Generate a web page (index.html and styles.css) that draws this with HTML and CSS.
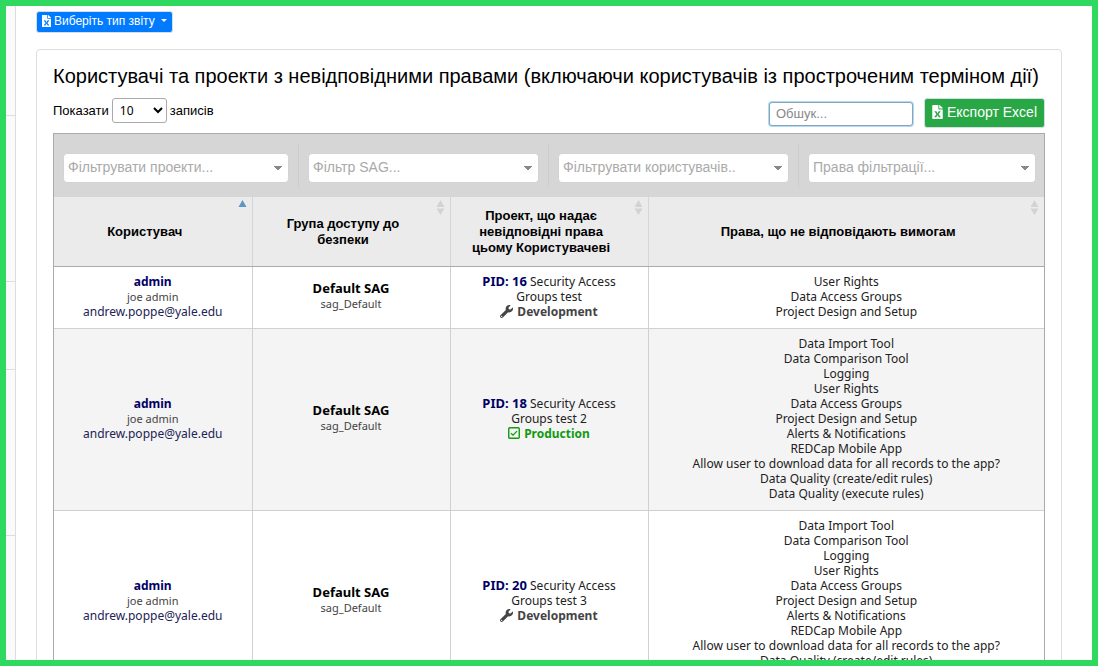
FILE: index.html
```html
<!DOCTYPE html>
<html lang="uk">
<head>
<meta charset="utf-8">
<title>Користувачі та проекти з невідповідними правами</title>
<link rel="stylesheet" href="styles.css">
</head>
<body>
<svg width="0" height="0" class="sprite" aria-hidden="true">
  <symbol id="file" viewBox="0 0 384 512"><path fill="currentColor" fill-rule="evenodd" d="M224 136V0H24C11 0 0 11 0 24v464c0 13 11 24 24 24h336c13 0 24-11 24-24V160H248c-13 0-24-11-24-24zM90 224h49c5 0 9 2 11 6 37 68 36 65 42 80 12-24 5-14 42-80 2-4 6-6 11-6h49c9 0 15 10 10 18L230 336l74 94c5 8-1 18-10 18h-49c-4 0-8-2-10-6-35-65-36-66-43-80-9 22-3 11-43 80-2 4-6 6-11 6H90c-9 0-15-10-10-18l76-94-76-94c-5-8 1-18 10-18zM384 122v6H256V0h6c7 0 13 3 17 7l98 98c4 4 7 11 7 17z"/></symbol>
  <symbol id="wrench" viewBox="0 0 512 512"><path fill="currentColor" fill-rule="evenodd" d="M508 109c-2-9-13-12-20-5l-74 74-68-11-11-68 74-74c7-7 4-18-6-20-48-12-101 1-139 39-40 40-52 98-35 149L19 403c-25 25-25 66 0 90s66 25 91 0l209-210c51 17 109 6 150-35 38-38 51-91 39-139zM64 472a24 24 0 1 1 0-48 24 24 0 0 1 0 48z"/></symbol>
  <symbol id="check" viewBox="0 0 12 12"><rect x="0.75" y="0.75" width="10.5" height="10.5" rx="1" fill="none" stroke="currentColor" stroke-width="1.4"/><path d="M3 6.2 5 8.1 9 4.1" fill="none" stroke="currentColor" stroke-width="1.3"/></symbol>
  <symbol id="both" viewBox="0 0 9 15"><path fill="currentColor" d="M4.500 0 8.500 7H.5zM.5 8.500h8L4.500 15z"/></symbol>
  <symbol id="asc" viewBox="0 0 9 15"><path fill="currentColor" d="M4.500 0 8.500 7H.5z"/></symbol>
</svg>
<div class="frame">
  <aside class="rail"><i></i><i></i><i></i><i></i></aside>
  <main class="main">
    <button class="btn report" type="button"><svg class="file"><use href="#file"/></svg>Виберіть тип звіту<span class="caret"></span></button>
    <section class="card">
      <h1>Користувачі та проекти з невідповідними правами (включаючи користувачів із простроченим терміном дії)</h1>
      <div class="tools">
        <label class="length">Показати <select><option>10</option><option>25</option></select> записів</label>
        <input class="search" type="search" placeholder="Обшук..." aria-label="Обшук">
        <button class="btn export" type="button"><svg class="file"><use href="#file"/></svg>Експорт Excel</button>
      </div>
      <div class="box">
        <div class="filters">
          <div><select aria-label="Фільтрувати проекти"><option>Фільтрувати проекти...</option></select></div>
          <div><select aria-label="Фільтр SAG"><option>Фільтр SAG...</option></select></div>
          <div><select aria-label="Фільтрувати користувачів"><option>Фільтрувати користувачів..</option></select></div>
          <div><select aria-label="Права фільтрації"><option>Права фільтрації...</option></select></div>
        </div>
        <table>
          <colgroup><col><col><col><col class="wide"></colgroup>
          <thead>
            <tr>
              <th>Користувач<svg class="sort active"><use href="#asc"/></svg></th>
              <th>Група доступу до безпеки<svg class="sort"><use href="#both"/></svg></th>
              <th>Проект, що надає невідповідні права цьому Користувачеві<svg class="sort"><use href="#both"/></svg></th>
              <th>Права, що не відповідають вимогам<svg class="sort"><use href="#both"/></svg></th>
            </tr>
          </thead>
          <tbody>
            <tr>
              <td><a class="user" href="#">admin</a><small>joe admin</small><a class="mail" href="#">andrew.poppe@yale.edu</a></td>
              <td><strong>Default SAG</strong><small>sag_Default</small></td>
              <td><a class="pid" href="#">PID: 16</a> Security Access<br>Groups test<div class="status"><svg><use href="#wrench"/></svg>Development</div></td>
              <td>User Rights<br>Data Access Groups<br>Project Design and Setup</td>
            </tr>
            <tr>
              <td><a class="user" href="#">admin</a><small>joe admin</small><a class="mail" href="#">andrew.poppe@yale.edu</a></td>
              <td><strong>Default SAG</strong><small>sag_Default</small></td>
              <td><a class="pid" href="#">PID: 18</a> Security Access<br>Groups test 2<div class="status live"><svg><use href="#check"/></svg>Production</div></td>
              <td>Data Import Tool<br>Data Comparison Tool<br>Logging<br>User Rights<br>Data Access Groups<br>Project Design and Setup<br>Alerts &amp; Notifications<br>REDCap Mobile App<br>Allow user to download data for all records to the app?<br>Data Quality (create/edit rules)<br>Data Quality (execute rules)</td>
            </tr>
            <tr>
              <td><a class="user" href="#">admin</a><small>joe admin</small><a class="mail" href="#">andrew.poppe@yale.edu</a></td>
              <td><strong>Default SAG</strong><small>sag_Default</small></td>
              <td><a class="pid" href="#">PID: 20</a> Security Access<br>Groups test 3<div class="status"><svg><use href="#wrench"/></svg>Development</div></td>
              <td>Data Import Tool<br>Data Comparison Tool<br>Logging<br>User Rights<br>Data Access Groups<br>Project Design and Setup<br>Alerts &amp; Notifications<br>REDCap Mobile App<br>Allow user to download data for all records to the app?<br>Data Quality (create/edit rules)<br>Data Quality (execute rules)</td>
            </tr>
          </tbody>
        </table>
      </div>
    </section>
  </main>
</div>
</body>
</html>
```
FILE: styles.css
```css
* { box-sizing: border-box; }
body { margin: 0; font: 13px/15px "Liberation Sans", Arial, sans-serif; color: #000; }
.sprite { position: absolute; }
.frame { display: flex; height: 100vh; overflow: hidden; border: 6px solid #2fd960; background: #fff; }
.rail { flex: 0 0 10px; background: #fafafa; border-right: 1px solid #ddd; }
.rail i { display: block; height: 166px; border-bottom: 1px solid #ddd; }
.rail i:first-child { height: 110px; }
.rail i:nth-child(3) { height: 88px; }
.main { flex: 1; min-width: 0; padding: 5px 30px 0 20px; }
.btn { display: inline-flex; align-items: center; border: 1px solid #d5dde5; border-radius: 3px; color: #fff; font-family: "Liberation Sans", Arial, sans-serif; white-space: nowrap; }
.file { width: 9px; height: 12px; margin-right: 3px; }
.report { height: 22px; padding: 0 5px 2px; background: #007bff; font-size: 12px; }
.caret { margin: 0 0 1px 6px; border: 3px solid transparent; border-top-color: #fff; border-bottom: 0; }
.card { margin-top: 16px; padding: 12px 16px; border: 1px solid #ddd; border-radius: 4px; }
h1 { margin: 0; font-size: 20px; line-height: 28px; font-weight: 400; white-space: nowrap; }
.tools { display: flex; align-items: flex-start; padding: 8px 0 5px; }
.length { display: flex; align-items: center; gap: 3px; margin-right: auto; height: 24px; }
.length select { width: 55px; height: 25px; padding: 0 3px; border: 1px solid #aaa; border-radius: 3px; background: #fff; font: 12px "Noto Sans", sans-serif; color: #000; }
.search { width: 144px; height: 24px; margin: 4px 11px 0 0; padding: 0 6px 2px; border: 1px solid #8fa3b0; border-radius: 3px; outline: 0; box-shadow: 0 0 0 1px #a8dcfa; font: 13px "Liberation Sans", Arial, sans-serif; }
.search::placeholder { color: #888; }
.export { height: 30px; padding: 0 7px 2px; background: #28a745; font-size: 14px; }
.export .file { width: 11px; height: 14px; margin-right: 4px; }
.box { border: 1px solid #aaa; }
.filters { display: grid; grid-template-columns: 245fr 250fr 250fr 245fr; padding: 10px 0; background: #d6d6d6; }
.filters div { padding: 9px 9px 5px; height: 43px; border-right: 1px solid #ccc; }
.filters div:last-child { padding-right: 8px; border: 0; }
.filters select {
  width: 100%; height: 30px; padding: 0 4px 2px; appearance: none;
  border: 1px solid #ced4da; border-radius: 4px;
  font: 14px "Liberation Sans", Arial, sans-serif; color: #aaa;
  background:
    linear-gradient(to bottom left, #888 50%, transparent 50%) right 10px center / 4px 5px no-repeat,
    linear-gradient(to bottom right, #888 50%, transparent 50%) right 6px center / 4px 5px no-repeat,
    #fff;
}
table { width: 100%; table-layout: fixed; border-collapse: collapse; text-align: center; }
.wide { width: 40%; }
th { position: relative; height: 69px; padding: 9px 24px 8px 8px; background: #ebebeb; border-bottom: 1px solid #aaa; border-right: 1px solid #d6d6d6; line-height: 16px; }
td { padding: 7px 20px 9px; border-right: 1px solid #d0d0d0; border-bottom: 1px solid #d0d0d0; font-family: "Noto Sans", sans-serif; font-size: 12px; color: #222; }
th:last-child, td:last-child { border-right: 0; }
tbody tr:nth-child(even) { background: #f4f4f4; }
.sort { position: absolute; top: 3px; right: 5px; width: 9px; height: 15px; color: #d3d3d3; }
.active { color: #5b97c6; }
a { color: #000066; text-decoration: none; }
.user, .mail, small, strong { display: block; }
.user, .pid { font-weight: 700; }
.pid, strong { font-size: 13px; }
.mail { color: #222255; }
small { font-size: 11px; line-height: 15px; color: #444; }
strong { color: #000; }
.status { display: flex; justify-content: center; align-items: center; gap: 4px; font-weight: 700; color: #444; }
.status svg { width: 13px; height: 13px; }
.live { color: #129a12; }
.live svg { width: 12px; height: 12px; }
```
